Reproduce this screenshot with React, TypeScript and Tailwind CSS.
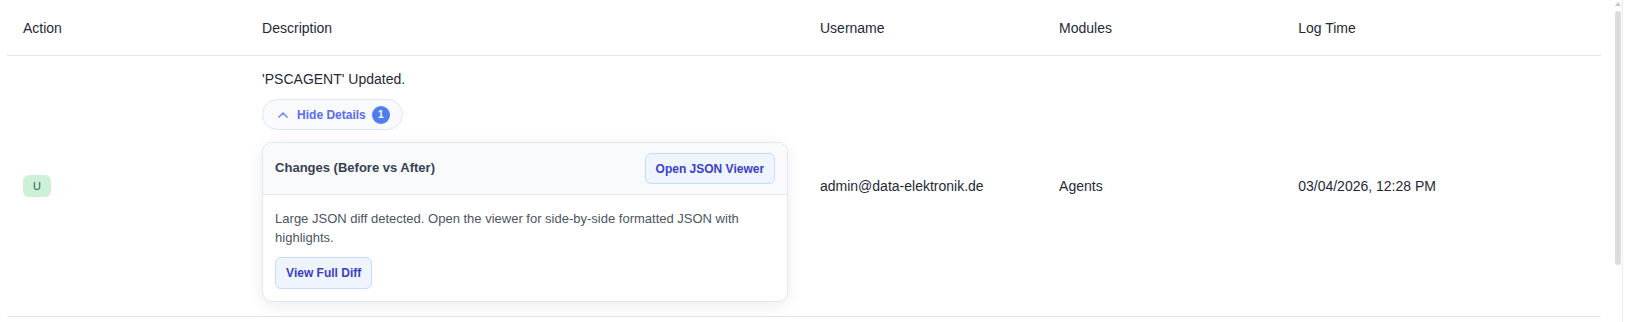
import React, { useState } from 'react';
import { ChevronUp, ChevronDown } from 'lucide-react';

const cols = 'grid grid-cols-[15%_35%_15%_15%_20%]';

export default function App() {
  const [open, setOpen] = useState(true);

  return (
    <div className="flex h-[322px] w-full overflow-hidden bg-white font-['Liberation_Sans',Arial,sans-serif] text-[#1f2937]">
      <div className="flex-1 pl-[7px] pr-[14px]">
        {/* Header */}
        <div className={`${cols} h-[56px] border-b border-[#e2e4e8] text-sm`}>
          <div className="flex items-center px-4">Action</div>
          <div className="flex items-center px-4">Description</div>
          <div className="flex items-center px-4">Username</div>
          <div className="flex items-center px-4">Modules</div>
          <div className="flex items-center px-4">Log Time</div>
        </div>

        {/* Row */}
        <div className={`${cols} border-b border-[#e2e4e8] text-sm`}>
          <div className="flex items-center px-4">
            <span className="rounded-md bg-[#cdf0d9] px-2.5 py-[3px] text-[11px] leading-4 font-medium text-[#276b3c]">
              U
            </span>
          </div>
          <div className="px-4 pt-[13px] pb-[14px]">
            <p className="leading-5">'PSCAGENT' Updated.</p>
            <button
              type="button"
              onClick={() => setOpen(!open)}
              className="mt-2.5 flex h-[31px] items-center gap-1.5 rounded-full border border-[#e0e6f0] bg-[#f8fafd] px-3 text-xs font-bold text-[#5b6cf3]"
            >
              {open ? (
                <ChevronUp size={16} strokeWidth={2.5} className="text-[#7a86f2]" />
              ) : (
                <ChevronDown size={16} strokeWidth={2.5} className="text-[#7a86f2]" />
              )}
              <span>{open ? 'Hide Details' : 'Show Details'}</span>
              <span className="flex h-[18px] w-[18px] items-center justify-center rounded-full bg-[#4f7ef2] text-[10px] text-white">
                1
              </span>
            </button>

            {open && (
              <div className="mt-3 w-[526px] overflow-hidden rounded-[10px] border border-[#e2e8f0] bg-white shadow-[0_4px_16px_rgba(15,23,42,0.08)]">
                <div className="flex items-center justify-between border-b border-[#e2e8f0] bg-[#f8fafc] px-3 py-2.5">
                  <span className="text-[13px] font-bold text-[#374151]">Changes (Before vs After)</span>
                  <button
                    type="button"
                    className="flex h-[31px] items-center rounded-md border border-[#c7dbfb] bg-[#eff5ff] px-2.5 text-xs font-bold text-[#3b3dc9]"
                  >
                    Open JSON Viewer
                  </button>
                </div>
                <div className="px-3 pt-[14px] pb-3">
                  <p className="text-[13px] leading-[19px] text-[#4b5563]">
                    Large JSON diff detected. Open the viewer for side-by-side formatted JSON with highlights.
                  </p>
                  <button
                    type="button"
                    className="mt-2.5 flex h-8 items-center rounded-md border border-[#c7dbfb] bg-[#eff5ff] px-2.5 text-xs font-bold text-[#3b3dc9]"
                  >
                    View Full Diff
                  </button>
                </div>
              </div>
            )}
          </div>
          <div className="flex items-center px-4">admin@data-elektronik.de</div>
          <div className="flex items-center px-4">Agents</div>
          <div className="flex items-center px-4">03/04/2026, 12:28 PM</div>
        </div>
      </div>

      {/* Scrollbar strip */}
      <div className="flex w-[12px]">
        <div className="flex w-[7px] flex-col">
          <div className="mt-[2px] h-0 w-0 border-x-[3px] border-b-[4px] border-x-transparent border-b-[#c8c8c8]" />
          <div className="mt-[5px] h-[254px] w-[6px] rounded-full bg-[#dcdcdc]" />
        </div>
        <div className="w-[5px] border-l border-[#ececec]" />
      </div>
    </div>
  );
}
